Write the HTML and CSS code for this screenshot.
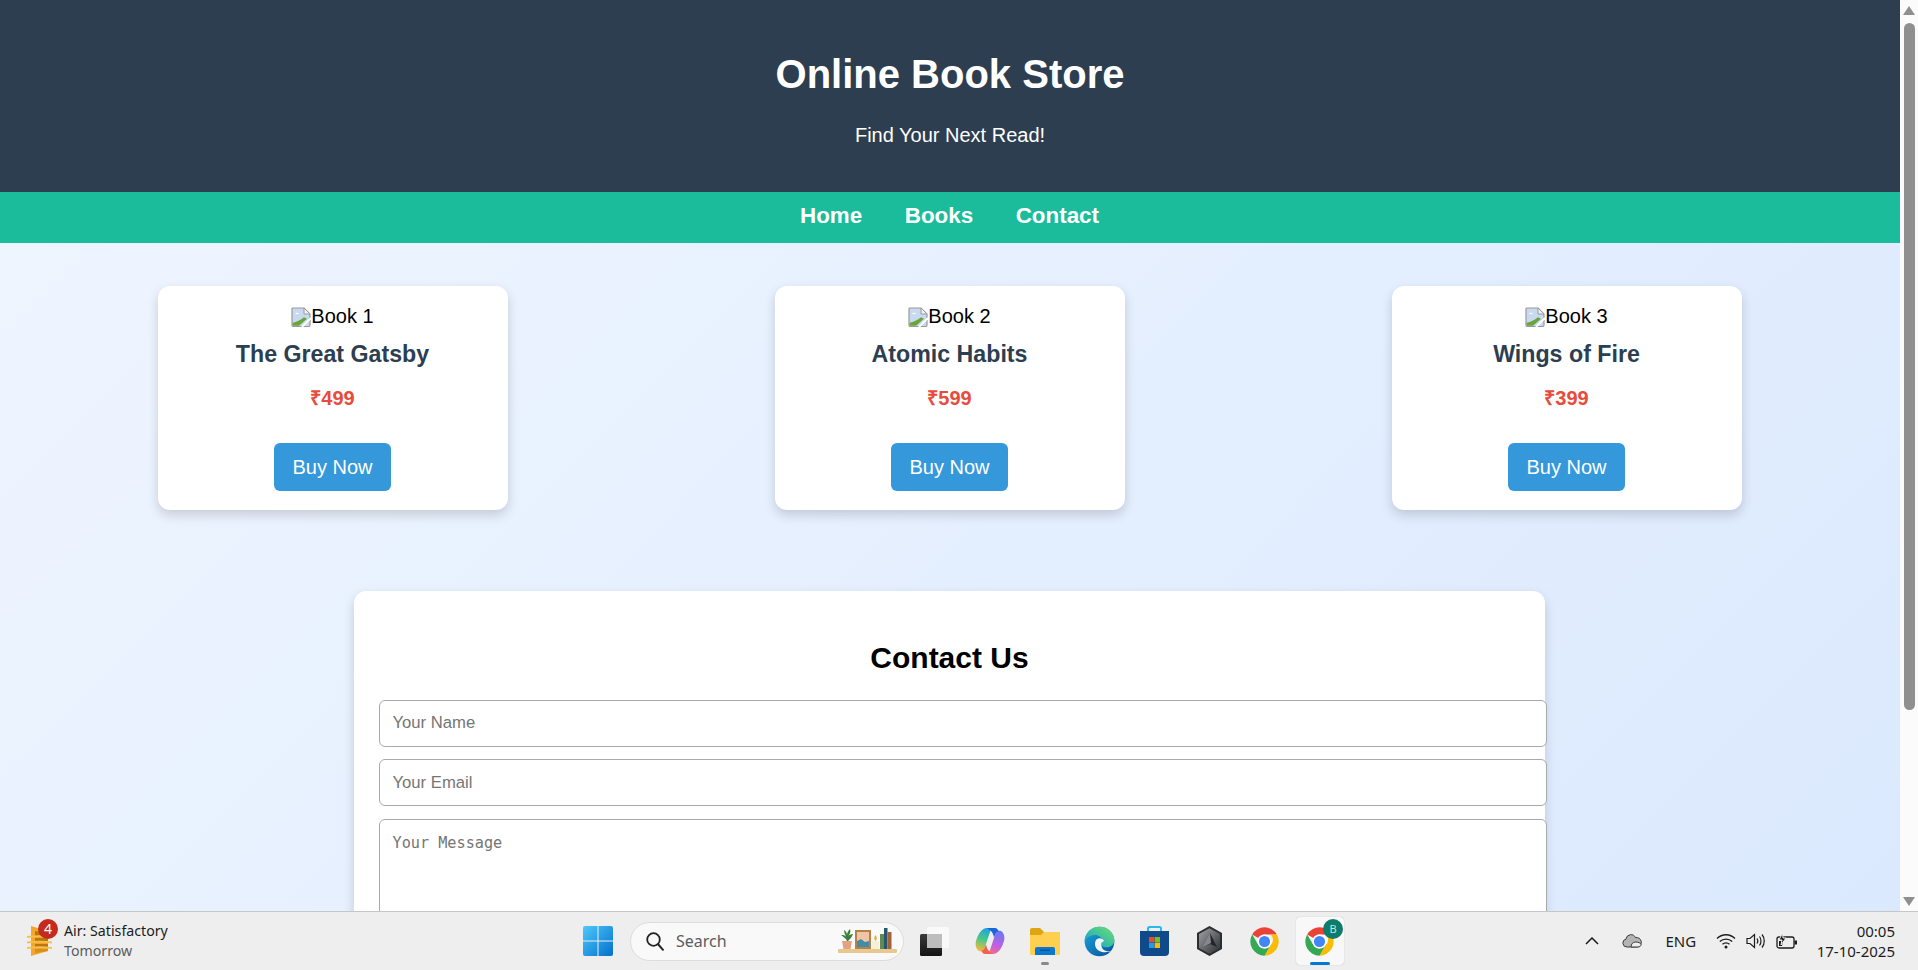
FILE: index.html
```html
<!DOCTYPE html>
<html lang="en">
<head>
    <meta charset="UTF-8">
    <meta name="viewport" content="width=device-width, initial-scale=1.0">
    <title>Online Book Store</title>
    <link rel="stylesheet" href="styles.css">
</head>
<body>
    <svg class="sprites" width="0" height="0">
        <defs>
            <symbol id="chrome" viewBox="0 0 48 48">
                <path fill="#ea4335" d="M43.05 13A22 22 0 0 0 4.95 13l9.52 5.5A11 11 0 0 1 24 13z"/>
                <path fill="#fbbc04" d="M24 46A22 22 0 0 0 43.05 13H33.53a11 11 0 0 1 0 16.5z"/>
                <path fill="#34a853" d="M4.95 13A22 22 0 0 0 24 46l9.53-16.5a11 11 0 0 1-19.06 0z"/>
                <circle cx="24" cy="24" r="11" fill="#fff"/>
                <circle cx="24" cy="24" r="8.6" fill="#4285f4"/>
            </symbol>
            <symbol id="broken" viewBox="0 0 20 20">
                <path fill="#c9d9ef" stroke="#9a9a9a" stroke-width="1.2" d="M1 2a1 1 0 0 1 1-1h11l6 6v11a1.5 1.5 0 0 1-1.5 1.5H2.5A1.5 1.5 0 0 1 1 18z"/>
                <path fill="#eef3fb" stroke="#9a9a9a" d="M13 1v6h6z"/>
                <path fill="#fff" d="M4 7c1-1.6 3-1.6 4 0z"/>
                <path fill="#6aa53a" d="M1.7 18.8v-3.1c4-.4 7.800-2.700 11.300-5.400l3 1.500-8 7z"/>
                <path stroke="#fff" stroke-width="1.8" d="M11 20 20 11"/>
            </symbol>
            <linearGradient id="winGrad" x1="0" y1="0" x2="1" y2="1">
                <stop offset="0" stop-color="#4fc8fb"/>
                <stop offset="1" stop-color="#0270cc"/>
            </linearGradient>
            <linearGradient id="edgeBlue" x1="0" y1="0" x2="1" y2="1">
                <stop offset="0" stop-color="#1ba7e0"/>
                <stop offset="1" stop-color="#0a4f96"/>
            </linearGradient>
            <linearGradient id="edgeGreen" x1="0" y1="1" x2="1" y2="0">
                <stop offset="0" stop-color="#0f9fd8"/>
                <stop offset="1" stop-color="#6fe06a"/>
            </linearGradient>
            <linearGradient id="copA" x1="0.6" y1="0" x2="0.3" y2="1">
                <stop offset="0" stop-color="#1f9fe8"/>
                <stop offset=".5" stop-color="#45c98a"/>
                <stop offset="1" stop-color="#f5b93b"/>
            </linearGradient>
            <linearGradient id="copB" x1="0.6" y1="0" x2="0.3" y2="1">
                <stop offset="0" stop-color="#6a78f0"/>
                <stop offset=".6" stop-color="#c35fe0"/>
                <stop offset="1" stop-color="#f2708a"/>
            </linearGradient>
            <linearGradient id="hexGrad" x1="0" y1="0" x2="1" y2="1">
                <stop offset="0" stop-color="#a0a3a8"/>
                <stop offset="1" stop-color="#2c2e32"/>
            </linearGradient>
            <linearGradient id="darkSquare" x1="0" y1="0" x2="0" y2="1">
                <stop offset="0" stop-color="#3a3a3a"/>
                <stop offset="1" stop-color="#141414"/>
            </linearGradient>
        </defs>
    </svg>

    <div class="screen">
        <div class="browser">
            <div class="page">
                <header class="site-header">
                    <h1>Online Book Store</h1>
                    <p>Find Your Next Read!</p>
                </header>

                <nav class="site-nav">
                    <a href="#">Home</a>
                    <a href="#">Books</a>
                    <a href="#">Contact</a>
                </nav>

                <section class="books">
                    <div class="book">
                        <div class="cover"><svg class="broken"><use href="#broken"/></svg>Book 1</div>
                        <h3>The Great Gatsby</h3>
                        <p class="price">₹499</p>
                        <button class="buy">Buy Now</button>
                    </div>
                    <div class="book">
                        <div class="cover"><svg class="broken"><use href="#broken"/></svg>Book 2</div>
                        <h3>Atomic Habits</h3>
                        <p class="price">₹599</p>
                        <button class="buy">Buy Now</button>
                    </div>
                    <div class="book">
                        <div class="cover"><svg class="broken"><use href="#broken"/></svg>Book 3</div>
                        <h3>Wings of Fire</h3>
                        <p class="price">₹399</p>
                        <button class="buy">Buy Now</button>
                    </div>
                </section>

                <section class="contact">
                    <h2>Contact Us</h2>
                    <form class="contact-form">
                        <input type="text" placeholder="Your Name">
                        <input type="email" placeholder="Your Email">
                        <textarea placeholder="Your Message"></textarea>
                    </form>
                </section>
            </div>

            <div class="scrollbar">
                <span class="arrow arrow-up"></span>
                <span class="thumb"></span>
                <span class="arrow arrow-down"></span>
            </div>
        </div>

        <footer class="taskbar">
            <div class="weather">
                <span class="weather-icon">
                    <svg width="25" height="30" viewBox="0 0 25 30">
                        <path fill="#f2a62a" d="M4 0l17 5v20L4 30z"/>
                        <path fill="#b9780f" d="M8 5l13 2v3H8zM8 12h13v3H8zM8 18h13v3H8z"/>
                        <path fill="#d98f1a" d="M8 23l13 0v2L8 27z"/>
                        <g fill="none" stroke="#f8c04a" stroke-width="1.8">
                            <path d="M0 11c8-1 17-1 25 0"/>
                            <path d="M0 16.5c8-1 17-1 25 0"/>
                            <path d="M0 22c8-1 17-1 25 0"/>
                        </g>
                    </svg>
                    <span class="weather-badge">4</span>
                </span>
                <div class="weather-text">
                    <span>Air: Satisfactory</span>
                    <span class="dim">Tomorrow</span>
                </div>
            </div>

            <div class="apps">
                <span class="tile">
                    <svg width="30" height="30" viewBox="0 0 30 30">
                        <path fill="url(#winGrad)" d="M0 2a2 2 0 0 1 2-2h12.5v14.5H0zM15.5 0H28a2 2 0 0 1 2 2v12.5H15.5zM0 15.5h14.5V30H2a2 2 0 0 1-2-2zM15.5 15.5H30V28a2 2 0 0 1-2 2H15.5z"/>
                    </svg>
                </span>
                <div class="search">
                    <svg class="search-icon" width="18" height="19" viewBox="0 0 18 19">
                        <circle cx="7.5" cy="7.5" r="6.3" fill="none" stroke="#222" stroke-width="1.8"/>
                        <path stroke="#222" stroke-width="2" stroke-linecap="round" d="M12.3 12.5 17 17.8"/>
                    </svg>
                    <span class="search-label">Search</span>
                    <svg class="search-art" width="60" height="26" viewBox="0 0 60 26">
                        <rect x="0" y="21" width="59" height="4" rx="1" fill="#e9c88f"/>
                        <path fill="#e3a183" d="M4 13h10l-1.5 8h-7z"/>
                        <path fill="#3c7d3a" d="M9 13C8 10 5 9 3 7c2 0 4 0 5 2-1-3-2-5-2-7 2 1 3 3 3 5 0-2 1-4 3-6 1 3 0 5-2 7 1-1 3-2 5-2-1 3-3 5-5 7z"/>
                        <rect x="17" y="2" width="16" height="19" fill="#b5824a"/>
                        <rect x="19" y="4" width="12" height="15" fill="#f0c4a4"/>
                        <path fill="#3f8ea6" d="M19 19v-6l4-2 4 3 4-1v6z"/>
                        <rect x="34" y="13" width="7" height="8" fill="#f6efdc"/>
                        <path fill="#f0a92c" d="M37.5 7c1.5 2 1.8 4 0 6-1.8-2-1.5-4 0-6z"/>
                        <rect x="42" y="6" width="4" height="15" fill="#5f8a55"/>
                        <rect x="46" y="0" width="3.5" height="21" fill="#27566e"/>
                        <rect x="49.5" y="4" width="4" height="17" fill="#a5623a"/>
                    </svg>
                </div>
                <span class="tile">
                    <svg width="30" height="29" viewBox="0 0 30 29">
                        <rect x="0" y="7" width="22" height="22" rx="1.5" fill="url(#darkSquare)"/>
                        <rect x="7" y="0" width="22" height="21" rx="1.5" fill="#f9f9f9"/>
                        <rect x="7" y="7" width="15" height="14" fill="#bdbdbd"/>
                    </svg>
                </span>
                <span class="tile">
                    <svg width="30" height="28" viewBox="0 0 30 28">
                        <path fill="url(#copA)" d="M12 1h8c-3 0-4 2-5 4L10 20c-1 3-3 5-6 4C1 22 0 18 1 14 3 7 7 1 12 1z"/>
                        <path fill="url(#copB)" d="M18 27h-8c3 0 4-2 5-4l5-15c1-3 3-5 6-4 3 2 4 6 3 10-2 7-6 13-11 13z"/>
                        <path fill="#1b62dc" d="M12 1h8c2 0 3 2 4 3.5-2-.5-3 1-4 3.5l-1 2.500c-.5-3-1.500-5-3-6.500-1-1-2.500-2-4-3z"/>
                        <path fill="#f4604a" d="M18 27h-8c-2 0-3-2-4-3.5 2 .5 3-1 4-3.500l1-2.500c.5 3 1.500 5 3 6.500 1 1 2.500 2 4 3z"/>
                    </svg>
                </span>
                <span class="tile tile-open">
                    <svg width="30" height="27" viewBox="0 0 30 27">
                        <path fill="#dfa510" d="M0 2a2 2 0 0 1 2-2h8l4 4h14a2 2 0 0 1 2 2v5H0z"/>
                        <path fill="#ffd04f" d="M0 7h11l3-3h14a2 2 0 0 1 2 2v20a1 1 0 0 1-1 1H1a1 1 0 0 1-1-1z"/>
                        <path fill="#0b78d0" d="M5 21a2 2 0 0 1 2-2h16a2 2 0 0 1 2 2v6H5z"/>
                        <rect x="10" y="21.5" width="10" height="1.4" fill="#0a4f96"/>
                    </svg>
                </span>
                <span class="tile">
                    <svg width="31" height="31" viewBox="0 0 48 48">
                        <circle cx="24" cy="24" r="23" fill="url(#edgeBlue)"/>
                        <path fill="url(#edgeGreen)" d="M1 24C1 11 11 1 24 1c13 0 23 9 23 21 0 7-6 11-12 11-5 0-9-2-9-4 0-1 2-2 2-6 0-5-5-9-11-9C9 14 3 19 1 24z"/>
                        <path fill="#eef6fb" d="M31 23C28 18 20 17 17.5 24 15 32 21 40 30 40.5c5 .3 10-.5 14-2-5 1-12 1-15-3-2-3-3-6-2-9 .5-1.5 2.5-2 4-3.5z"/>
                    </svg>
                </span>
                <span class="tile">
                    <svg width="29" height="30" viewBox="0 0 29 30">
                        <path fill="none" stroke="#2ab8ee" stroke-width="2" d="M8 7V2.500A1.500 1.500 0 0 1 9.500 1h10A1.500 1.500 0 0 1 21 2.500V7"/>
                        <path fill="#0f4a8a" d="M0 5h29v21a4 4 0 0 1-4 4H4a4 4 0 0 1-4-4z"/>
                        <rect x="9" y="11" width="5.3" height="5.3" fill="#ea4b24"/>
                        <rect x="14.7" y="11" width="5.3" height="5.3" fill="#7ebc1e"/>
                        <rect x="9" y="16.7" width="5.3" height="5.3" fill="#1e9be8"/>
                        <rect x="14.7" y="16.7" width="5.3" height="5.3" fill="#fbb80c"/>
                    </svg>
                </span>
                <span class="tile">
                    <svg width="27" height="30" viewBox="0 0 27 30">
                        <path fill="#2b2d31" d="M13.5 0 26 7v16l-12.5 7L1 23V7z"/>
                        <path fill="url(#hexGrad)" d="M13.5 2.2 24 8v14l-10.5 5.8L3 22V8z"/>
                        <path fill="#232528" d="M14 7l7 14-7-3-8 3.500z"/>
                        <path fill="#c9ccd0" opacity=".6" d="M14 7l1 10-9 4.500z"/>
                    </svg>
                </span>
                <span class="tile">
                    <svg width="31" height="31"><use href="#chrome"/></svg>
                </span>
                <span class="tile tile-active">
                    <svg width="31" height="31"><use href="#chrome"/></svg>
                    <span class="profile-badge">B</span>
                </span>
            </div>

            <div class="tray">
                <svg class="tray-chevron" width="14" height="8" viewBox="0 0 14 8">
                    <path fill="none" stroke="#1c1c1c" stroke-width="1.5" d="M1 7l6-6 6 6"/>
                </svg>
                <svg class="tray-cloud" width="20" height="14" viewBox="0 0 20 14">
                    <path fill="#b4b4b4" stroke="#3c3c3c" d="M5 13a4 4 0 0 1-1-7.900 5 5 0 0 1 9.500-1.500A4.500 4.500 0 0 1 15.500 13z"/>
                    <path fill="#eee" stroke="#3c3c3c" d="M9 13c0-3 2-5 4.500-5 2.500 0 5.500 1 5.500 2.500S18 13 15.500 13z"/>
                </svg>
                <span class="tray-lang">ENG</span>
                <svg class="tray-wifi" width="20" height="16" viewBox="0 0 20 16">
                    <g fill="none" stroke="#1c1c1c" stroke-width="1.3">
                        <path d="M1 5.500c5-5 13-5 18 0"/>
                        <path d="M3.800 8.500c3.500-3.300 9-3.300 12.400 0"/>
                        <path d="M6.500 11.300c2-1.800 5-1.800 7 0"/>
                    </g>
                    <circle cx="10" cy="14" r="1.5" fill="#1c1c1c"/>
                </svg>
                <svg class="tray-volume" width="20" height="16" viewBox="0 0 20 16">
                    <g fill="none" stroke="#1c1c1c" stroke-width="1.2">
                        <path d="M1 5.500h3L8.500 1.500v13L4 10.500H1z"/>
                        <path d="M11 5.500c1 1.500 1 3.500 0 5"/>
                        <path d="M13.500 3.500c2 2.500 2 6.500 0 9"/>
                        <path d="M16 1.500c3 3.500 3 9.500 0 13"/>
                    </g>
                </svg>
                <svg class="tray-battery" width="21" height="16" viewBox="0 0 21 16">
                    <rect x="1" y="4" width="17" height="11" rx="2" fill="none" stroke="#1c1c1c" stroke-width="1.3"/>
                    <rect x="18.5" y="7.5" width="2.5" height="4" fill="#1c1c1c"/>
                    <path fill="#1c1c1c" d="M3 13V8h4l-1 5z"/>
                    <path fill="#1c1c1c" stroke="#eee" d="M6.500 0 3 7h3l-1 5 5-7H7z"/>
                </svg>
                <div class="clock">
                    <span>00:05</span>
                    <span>17-10-2025</span>
                </div>
            </div>
        </footer>
    </div>
</body>
</html>
```

FILE: styles.css
```css
* {
    box-sizing: border-box;
}

html, body {
    margin: 0;
    height: 100%;
    overflow: hidden;
}

body {
    font-family: "Liberation Sans", Arial, sans-serif;
    font-size: 20px;
}

.sprites {
    position: absolute;
}

.screen {
    height: 970px;
    display: flex;
    flex-direction: column;
}

.browser {
    height: 911px;
    display: flex;
    overflow: hidden;
}

.page {
    flex: 1;
    height: 1157px;
    background: linear-gradient(135deg, #f0f6ff, #d9e8fe);
}

/* header + nav */
.site-header {
    height: 192px;
    padding-top: 51px;
    background-color: #2c3e50;
    color: #fff;
    text-align: center;
}

.site-header h1 {
    margin: 0 0 27px;
    font-size: 40px;
    line-height: 46px;
}

.site-header p {
    margin: 0;
    line-height: 23px;
}

.site-nav {
    height: 51px;
    display: flex;
    justify-content: center;
    align-items: center;
    gap: 42.5px;
    padding: 0 1px 3px 0;
    background-color: #1abc9c;
}

.site-nav a {
    color: #fff;
    font-size: 22.4px;
    font-weight: bold;
    text-decoration: none;
}

/* book cards */
.books {
    display: flex;
    justify-content: space-around;
    padding: 43px 24.5px 0;
}

.book {
    width: 350px;
    height: 224px;
    padding: 19px 1px 0 0;
    background: #fff;
    border-radius: 12px;
    box-shadow: 0 5px 12px rgba(0, 0, 0, 0.16);
    text-align: center;
}

.cover {
    display: flex;
    justify-content: center;
    align-items: center;
    height: 23px;
    color: #000;
}

.broken {
    width: 20px;
    height: 20px;
}

.book h3 {
    margin: 13px 0 0;
    color: #2c3e50;
    font-size: 23.2px;
    line-height: 27px;
}

.price {
    margin: 19px 0 0;
    color: #e74c3c;
    font-weight: bold;
    line-height: 23px;
}

.buy {
    width: 117px;
    height: 48px;
    margin-top: 33px;
    padding: 0;
    background-color: #3498db;
    color: #fff;
    border: none;
    border-radius: 6px;
    font-family: inherit;
    font-size: 20px;
}

/* contact form */
.contact {
    width: 1191px;
    height: 500px;
    margin: 81px 0 0 354px;
    padding: 50px 25px 0;
    background: #fff;
    border-radius: 12px;
    box-shadow: 0 5px 12px rgba(0, 0, 0, 0.16);
}

.contact h2 {
    margin: 0 0 25px;
    color: #000;
    font-size: 30px;
    line-height: 34px;
    text-align: center;
}

.contact-form {
    display: flex;
    flex-direction: column;
    gap: 12px;
}

.contact-form input,
.contact-form textarea {
    width: 1168px;
    padding: 12.5px;
    background: #fff;
    border: 1px solid #a9a9a9;
    border-radius: 6px;
    font-size: 16.67px;
    resize: none;
}

.contact-form input {
    height: 47px;
    padding-bottom: 14px;
    font-family: inherit;
}

.contact-form input[type="email"] {
    padding-bottom: 12.5px;
}

.contact-form textarea {
    height: 130px;
    margin-top: 1px;
    padding-top: 14px;
    font-family: "DejaVu Sans Mono", monospace;
    font-size: 15.2px;
}

/* scrollbar */
.scrollbar {
    width: 18px;
    display: flex;
    flex-direction: column;
    align-items: center;
    background-color: #fbfbfb;
}

.thumb {
    width: 11px;
    height: 687px;
    margin-top: 8px;
    background-color: #8f8f8f;
    border-radius: 6px;
}

.arrow {
    width: 0;
    height: 0;
    border-left: 6.5px solid transparent;
    border-right: 6.5px solid transparent;
}

.arrow-up {
    margin-top: 6px;
    border-bottom: 9px solid #8f8f8f;
}

.arrow-down {
    margin-top: 187px;
    border-top: 9px solid #8f8f8f;
}

/* windows taskbar */
.taskbar {
    height: 59px;
    display: grid;
    grid-template-columns: 570.5px auto 1fr;
    align-items: center;
    background-color: #eeeeee;
    border-top: 1px solid #c6c6c6;
    font-family: "Noto Sans", sans-serif;
    font-size: 14px;
    color: #1c1c1c;
}

.weather {
    display: flex;
    align-items: center;
    gap: 12px;
    padding-left: 27px;
}

.weather-icon {
    position: relative;
    display: flex;
}

.weather-badge {
    position: absolute;
    top: -7px;
    left: 11px;
    width: 20px;
    height: 20px;
    background-color: #c42b1c;
    border-radius: 50%;
    color: #fff;
    font-size: 14px;
    line-height: 20px;
    text-align: center;
}

.weather-text {
    display: flex;
    flex-direction: column;
    font-size: 14.2px;
    line-height: 20px;
}

.dim {
    color: #5c5c5c;
}

.apps {
    display: flex;
    align-items: center;
}

.tile {
    position: relative;
    width: 55px;
    height: 48px;
    display: flex;
    justify-content: center;
    align-items: center;
}

.tile-open::after,
.tile-active::after {
    content: "";
    position: absolute;
    bottom: 0;
    left: 50%;
    height: 3px;
    border-radius: 2px;
    transform: translateX(-50%);
}

.tile-open::after {
    width: 8px;
    background-color: #8a8a8a;
}

.tile-active::after {
    width: 20px;
    background-color: #0078d4;
}

.tile-active::before {
    content: "";
    position: absolute;
    top: 0;
    left: 3.5px;
    width: 48px;
    height: 48px;
    background-color: #f8f8f8;
    border-radius: 4px;
    box-shadow: 0 0 1px rgba(0, 0, 0, 0.3);
}

.tile-active svg {
    position: relative;
}

.profile-badge {
    position: absolute;
    top: 2px;
    left: 31px;
    width: 20px;
    height: 20px;
    background-color: #0f7b6c;
    border-radius: 50%;
    color: #bfe5dc;
    font-size: 11px;
    line-height: 20px;
    text-align: center;
}

.search {
    width: 274px;
    height: 39px;
    margin: 0 3px 0 4.5px;
    padding: 0 5px 0 15px;
    display: flex;
    align-items: center;
    background-color: #f9f9f9;
    border: 1px solid #dcdcdc;
    border-radius: 20px;
}

.search-label {
    margin-left: 12px;
    color: #5c5c5c;
    font-size: 16px;
}

.search-art {
    margin-left: auto;
}

.tray {
    display: flex;
    align-items: center;
    margin-left: auto;
    padding-right: 23px;
}

.tray-chevron {
    margin-right: 23px;
}

.tray-cloud {
    margin-right: 24px;
}

.tray-lang {
    margin-right: 19.5px;
    font-size: 15px;
}

.tray-volume {
    margin: 0 10px;
}

.clock {
    display: flex;
    flex-direction: column;
    align-items: flex-end;
    margin-left: 20px;
    font-size: 15px;
    line-height: 20px;
}
```
